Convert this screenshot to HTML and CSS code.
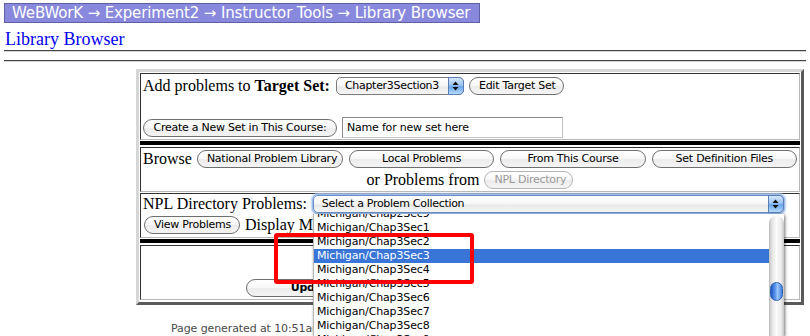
FILE: index.html
```html
<!DOCTYPE html>
<html>
<head>
<meta charset="utf-8">
<title>Library Browser</title>
<link rel="stylesheet" href="styles.css">
</head>
<body>
<div class="crumbs">WeBWorK → Experiment2 → Instructor Tools → Library Browser</div>
<div class="title">Library Browser</div>
<hr class="rule rule-a">
<hr class="rule rule-b">
<div class="panel">
  <div class="cell cell-target">
    <div class="line line-1">
      <span class="label">Add problems to <b>Target Set:</b></span>
      <span class="popup popup-set">Chapter3Section3<span class="arrows"><svg width="7" height="10" viewBox="0 0 7 10"><polygon points="0.5,4 3.5,0.5 6.5,4" fill="#111"/><polygon points="0.5,6 3.5,9.5 6.5,6" fill="#111"/></svg></span></span>
      <button class="btn btn-edit">Edit Target Set</button>
    </div>
    <div class="line line-2">
      <button class="btn btn-create">Create a New Set in This Course:</button>
      <span class="field">Name for new set here</span>
    </div>
  </div>
  <div class="bar"></div>
  <div class="cell cell-browse">
    <div class="line line-1">
      <span class="label">Browse</span>
      <button class="btn btn-wide first">National Problem Library</button>
      <button class="btn btn-wide">Local Problems</button>
      <button class="btn btn-wide">From This Course</button>
      <button class="btn btn-wide">Set Definition Files</button>
    </div>
    <div class="line line-2">
      <span class="label">or Problems from</span>
      <button class="btn btn-off">NPL Directory</button>
    </div>
  </div>
  <div class="cell cell-npl">
    <div class="line line-1">
      <span class="label">NPL Directory Problems:</span>
      <span class="popup popup-big">Select a Problem Collection<span class="arrows"><svg width="7" height="10" viewBox="0 0 7 10"><polygon points="0.5,4 3.5,0.5 6.5,4" fill="#111"/><polygon points="0.5,6 3.5,9.5 6.5,6" fill="#111"/></svg></span></span>
    </div>
    <div class="line line-2">
      <button class="btn btn-view">View Problems</button>
      <span class="label display">Display Mode:</span>
    </div>
  </div>
  <div class="bar"></div>
  <div class="cell cell-update">
    <button class="btn btn-update">Update Display</button>
  </div>
</div>
<div class="footer">Page generated at 10:51am on 06/12/2008</div>

<div class="menu">
  <div class="menu-list">
    <div class="item">Michigan/Chap2Sec9</div>
    <div class="item">Michigan/Chap3Sec1</div>
    <div class="item">Michigan/Chap3Sec2</div>
    <div class="item selected">Michigan/Chap3Sec3</div>
    <div class="item">Michigan/Chap3Sec4</div>
    <div class="item">Michigan/Chap3Sec5</div>
    <div class="item">Michigan/Chap3Sec6</div>
    <div class="item">Michigan/Chap3Sec7</div>
    <div class="item">Michigan/Chap3Sec8</div>
    <div class="item">Michigan/Chap3Sec9</div>
  </div>
  <div class="scroll"><div class="thumb"></div></div>
</div>
<div class="annot"></div>
</body>
</html>
```
FILE: styles.css
```css
html, body {
  margin: 0;
  padding: 0;
  background: #ffffff;
}
body {
  font-family: "Liberation Serif", "Times New Roman", serif;
  font-size: 16px;
  color: #000;
  width: 810px;
  height: 336px;
  overflow: hidden;
  position: relative;
}

.crumbs {
  box-sizing: border-box;
  margin: 3px 0 0 4px;
  width: 476px;
  height: 20px;
  line-height: 18px;
  padding-left: 7px;
  background: #8888dd;
  border: 1px solid #5f5fa3;
  color: #ffffff;
  font-family: "DejaVu Sans", sans-serif;
  font-size: 15px;
  letter-spacing: -0.15px;
  white-space: nowrap;
  overflow: hidden;
}

.title {
  margin: 6px 0 0 5px;
  height: 21px;
  line-height: 21px;
  font-size: 18px;
  color: #0000ee;
}

.rule {
  margin: 0 4px;
  height: 0;
  border: 0;
  border-top: 1px solid #444;
  border-bottom: 1px solid #d4d4d4;
}
.rule-a { margin-bottom: 8px; }
.rule-b { margin-bottom: 7px; }

.panel {
  margin: 0 6px 0 136px;
  border: 3px solid;
  border-color: #d6d6d6 #5a5a5a #5a5a5a #d6d6d6;
  padding: 1px 1px 2px 1px;
}

.cell {
  border: 1px solid;
  border-color: #333 #b8b8b8 #b8b8b8 #333;
  padding: 0 2px;
}
.cell + .cell { margin-top: 1px; }

.bar {
  height: 4px;
  background: #000;
  margin: 1px 0 2px 0;
}

.line {
  display: flex;
  align-items: center;
  white-space: nowrap;
}
.label { line-height: 18px; }

.cell-target { padding-top: 1px; padding-bottom: 1px; }
.cell-target .line-1 { height: 22px; }
.cell-target .line-2 { height: 21px; margin-top: 20px; }

.cell-browse { padding-top: 1px; padding-bottom: 1px; }
.cell-browse .line-1 { height: 20px; }
.cell-browse .line-2 { height: 21px; justify-content: center; }

.cell-npl { padding-bottom: 1px; }
.cell-npl .line-1 { height: 20px; }
.cell-npl .line-2 { height: 22px; }

.cell-update { padding-top: 31px; padding-bottom: 4px; height: 18px; }

.btn {
  box-sizing: border-box;
  height: 18px;
  margin: 0;
  padding: 0 9px;
  border: 1px solid #6f6f6f;
  border-radius: 9px;
  background: linear-gradient(#ffffff 0%, #f7f7f7 50%, #ececec 51%, #f4f4f4 100%);
  font-family: "DejaVu Sans", sans-serif;
  font-size: 11px;
  letter-spacing: -0.25px;
  line-height: 16px;
  color: #000;
  text-align: center;
  white-space: nowrap;
}
.btn-edit { margin-left: 5px; width: 95px; }
.btn-create { width: 194px; margin-left: 0; }
.btn-wide { width: 146px; margin-left: 6px; }
.btn-wide.first { margin-left: 5px; }
.btn-off { margin-left: 5px; width: 89px; color: #9a9a9a; border-color: #b4b4b4; }
.btn-view { margin-left: 1px; width: 96px; }
.btn-update { margin-left: 103px; width: 180px; font-weight: bold; }

.field {
  box-sizing: border-box;
  margin-left: 5px;
  width: 221px;
  height: 21px;
  border: 1px solid;
  border-color: #8a8a8a #c4c4c4 #c4c4c4 #8a8a8a;
  padding-left: 4px;
  font-family: "DejaVu Sans", sans-serif;
  font-size: 11px;
  letter-spacing: -0.2px;
  line-height: 19px;
}

.popup {
  position: relative;
  box-sizing: border-box;
  height: 18px;
  border: 1px solid #7c7c7c;
  border-radius: 5px;
  background: linear-gradient(#ffffff 0%, #f6f6f6 50%, #e9e9e9 55%, #f5f5f5 100%);
  font-family: "DejaVu Sans", sans-serif;
  font-size: 11px;
  letter-spacing: -0.3px;
  line-height: 16px;
  padding-left: 8px;
  white-space: nowrap;
}
.popup .arrows {
  position: absolute;
  right: -1px;
  top: -1px;
  width: 16px;
  height: 18px;
  box-sizing: border-box;
  border: 1px solid #5a7fb8;
  border-radius: 0 5px 5px 0;
  background: linear-gradient(#d4e6fc 0%, #9cc4f2 45%, #6aa5ec 55%, #b6dbfc 100%);
  display: flex;
  align-items: center;
  justify-content: center;
}
.popup-set { margin-left: 6px; width: 128px; }
.popup-big {
  margin-left: 6px;
  width: 471px;
  border-color: #6a8fc8;
  box-shadow: 0 0 0 1px #9dbbe6, 0 0 2px 2px #b9d0f0;
}

.display { margin-left: 5px; }

.footer {
  margin: 17px 0 0 171px;
  font-family: "DejaVu Sans", sans-serif;
  font-size: 11px;
  letter-spacing: -0.1px;
  line-height: 13px;
  color: #4a4a4a;
  white-space: nowrap;
}

.menu {
  position: absolute;
  left: 313px;
  top: 214px;
  width: 471px;
  height: 122px;
  display: flex;
  background: #fff;
  border-left: 1px solid #b8b8b8;
  box-sizing: border-box;
  box-shadow: 1px 1px 3px rgba(0,0,0,0.55);
  overflow: hidden;
}
.menu-list {
  flex: 1;
  margin-top: -7px;
}
.item {
  height: 14px;
  line-height: 14px;
  padding-left: 3px;
  font-family: "DejaVu Sans", sans-serif;
  font-size: 11px;
  letter-spacing: -0.15px;
  color: #000;
  white-space: nowrap;
}
.item.selected {
  background: #3875d7;
  color: #fff;
}
.scroll {
  position: relative;
  width: 15px;
  margin-top: 2px;
  border-radius: 7px 7px 0 0;
  background: linear-gradient(to right, #bdbdbd 0%, #e4e4e4 20%, #fbfbfb 50%, #ececec 80%, #c4c4c4 100%);
}
.thumb {
  position: absolute;
  left: 1px;
  top: 66px;
  width: 13px;
  height: 19px;
  border-radius: 7px;
  border: 1px solid #2d5fb0;
  box-sizing: border-box;
  background: linear-gradient(to right, #1d56c2 0%, #5e9af0 40%, #9cc8fa 60%, #3f7de0 100%);
}

.annot {
  position: absolute;
  left: 274px;
  top: 233px;
  width: 200px;
  height: 51px;
  box-sizing: border-box;
  border: 4px solid #ff0000;
  border-radius: 3px;
}
```
